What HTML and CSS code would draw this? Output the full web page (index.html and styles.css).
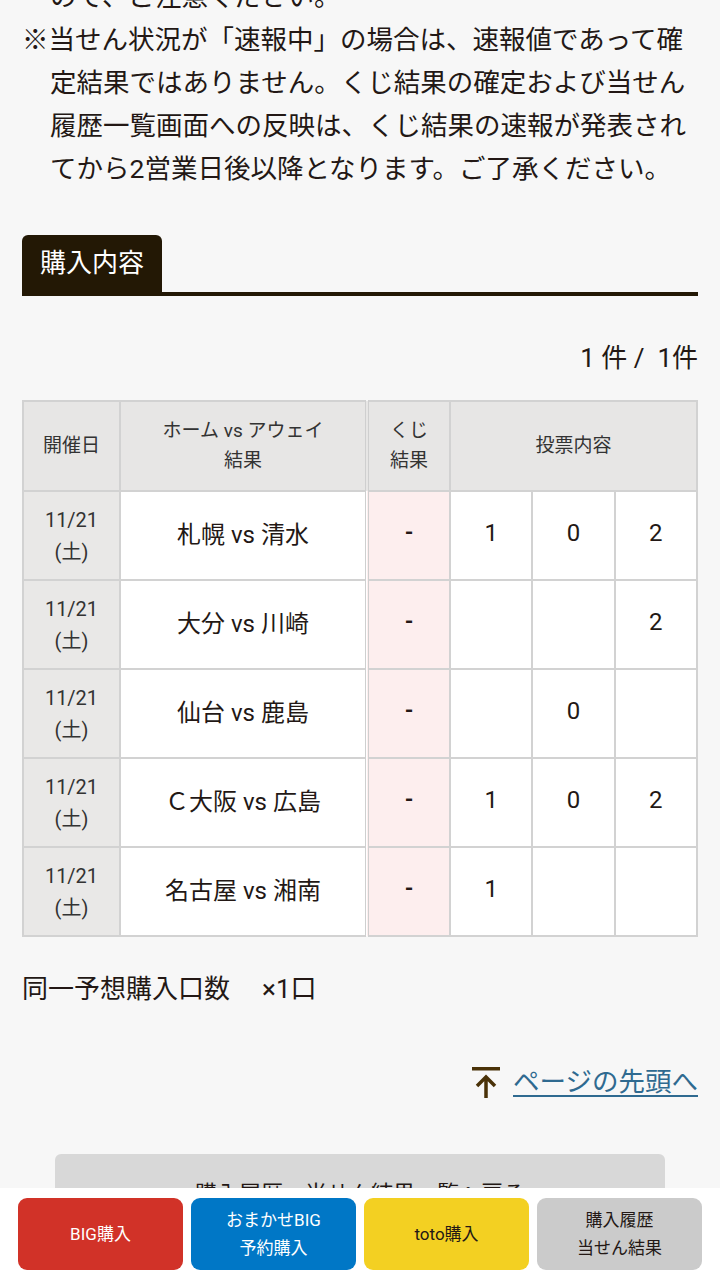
FILE: index.html
```html
<!DOCTYPE html>
<html lang="ja">
<head>
  <meta charset="UTF-8" />
  <meta name="viewport" content="width=device-width, initial-scale=1.0" />
  <title>購入内容</title>
  <link rel="stylesheet" href="styles.css">
</head>
<body>
  <div class="container">
    <div class="notes">
      <p class="note note-tail">ので、ご注意ください。</p>
      <p class="note">※当せん状況が「速報中」の場合は、速報値であって確定結果ではありません。くじ結果の確定および当せん履歴一覧画面への反映は、くじ結果の速報が発表されてから2営業日後以降となります。ご了承ください。</p>
    </div>

    <div class="section-head">
      <h2 class="tab">購入内容</h2>
    </div>

    <p class="count">1 件 /&nbsp; 1件</p>

    <table class="result-table">
      <colgroup>
        <col class="c-date">
        <col class="c-match">
        <col class="c-kuji">
        <col class="c-vote">
        <col class="c-vote">
        <col class="c-vote">
      </colgroup>
      <thead>
        <tr>
          <th>開催日</th>
          <th>ホーム vs アウェイ<br>結果</th>
          <th class="kuji">くじ<br>結果</th>
          <th colspan="3">投票内容</th>
        </tr>
      </thead>
      <tbody>
        <tr>
          <td class="date">11/21<br>(土)</td>
          <td class="match">札幌 vs 清水</td>
          <td class="kuji">-</td>
          <td class="vote">1</td>
          <td class="vote">0</td>
          <td class="vote">2</td>
        </tr>
        <tr>
          <td class="date">11/21<br>(土)</td>
          <td class="match">大分 vs 川崎</td>
          <td class="kuji">-</td>
          <td class="vote"></td>
          <td class="vote"></td>
          <td class="vote">2</td>
        </tr>
        <tr>
          <td class="date">11/21<br>(土)</td>
          <td class="match">仙台 vs 鹿島</td>
          <td class="kuji">-</td>
          <td class="vote"></td>
          <td class="vote">0</td>
          <td class="vote"></td>
        </tr>
        <tr>
          <td class="date">11/21<br>(土)</td>
          <td class="match">Ｃ大阪 vs 広島</td>
          <td class="kuji">-</td>
          <td class="vote">1</td>
          <td class="vote">0</td>
          <td class="vote">2</td>
        </tr>
        <tr>
          <td class="date">11/21<br>(土)</td>
          <td class="match">名古屋 vs 湘南</td>
          <td class="kuji">-</td>
          <td class="vote">1</td>
          <td class="vote"></td>
          <td class="vote"></td>
        </tr>
      </tbody>
    </table>

    <p class="units">同一予想購入口数　<span class="units-num">×1口</span></p>

    <div class="pagetop">
      <a href="#">
        <svg class="pagetop-icon" width="30" height="32" viewBox="0 0 30 32">
          <rect x="1" y="0" width="28" height="3.5" fill="#4a3208"/>
          <path d="M15 31 V11 M6 19 L15 10 L24 19" fill="none" stroke="#4a3208" stroke-width="3.5"/>
        </svg><span class="pagetop-text">ページの先頭へ</span>
      </a>
    </div>

    <div class="back-box">
      <p>購入履歴・当せん結果一覧へ戻る</p>
    </div>
  </div>

  <nav class="bottom-bar">
    <a class="btn btn-big" href="#">BIG購入</a>
    <a class="btn btn-omakase" href="#">おまかせBIG<br>予約購入</a>
    <a class="btn btn-toto" href="#">toto購入</a>
    <a class="btn btn-history" href="#">購入履歴<br>当せん結果</a>
  </nav>
</body>
</html>
```

FILE: styles.css
```css
* {
  margin: 0;
  padding: 0;
  box-sizing: border-box;
}
body {
  font-family: Roboto, "Noto Sans CJK JP", sans-serif;
  background: #f7f7f7;
  color: #231815;
}
.container {
  padding: 0 22px 140px;
}
.notes {
  margin-top: -25px;
}
.note {
  font-size: 26.5px;
  line-height: 43px;
  padding-left: 28px;
  text-indent: -28px;
}
.note-tail {
  text-indent: 0;
}
.section-head {
  margin-top: 45px;
  display: flex;
  border-bottom: 4px solid #231805;
}
.tab {
  background: #231805;
  color: #fff;
  font-size: 26px;
  font-weight: normal;
  height: 57px;
  line-height: 57px;
  padding: 0 18px;
  border-radius: 6px 6px 0 0;
}
.count {
  margin-top: 45px;
  text-align: right;
  font-size: 26px;
  line-height: 34px;
  margin-bottom: 25px;
}
.result-table {
  width: 100%;
  border-collapse: collapse;
  table-layout: fixed;
  border: 2px solid #d2d2d2;
}
.c-date { width: 97px; }
.c-match { width: 247px; }
.c-kuji { width: 83px; }
.result-table th,
.result-table td {
  border: 2px solid #d2d2d2;
  text-align: center;
  vertical-align: middle;
}
.result-table th {
  background: #e7e6e5;
  font-size: 19px;
  font-weight: normal;
  line-height: 30px;
  color: #333;
  height: 90px;
}
.result-table .kuji {
  border-left: 4px double #cfcfcf;
}
.result-table td {
  height: 89px;
  background: #fff;
}
.result-table td.date {
  background: #e9e8e7;
  font-size: 20px;
  line-height: 32px;
  color: #333;
}
.result-table td.match,
.result-table td.vote,
.result-table td.kuji {
  font-size: 24px;
  padding-bottom: 6px;
}
.result-table td.kuji {
  background: #fdeeee;
  font-size: 22px;
  font-weight: bold;
}
.units {
  margin-top: 35px;
  font-size: 26px;
  line-height: 34px;
}
.units-num {
  margin-left: 6px;
}
.pagetop {
  margin-top: 56px;
  display: flex;
  justify-content: flex-end;
}
.pagetop a {
  display: flex;
  align-items: center;
  gap: 12px;
  color: #2f6a90;
  text-decoration: none;
}
.pagetop-icon {
  margin-top: 2px;
}
.pagetop-text {
  font-size: 26.5px;
  line-height: 40px;
  text-decoration: underline;
  text-underline-offset: 4px;
}
.back-box {
  margin: 52px 33px 0;
  background: #d8d8d8;
  border-radius: 6px;
  padding: 22px 20px 30px;
  text-align: center;
  font-size: 22px;
  line-height: 36px;
}
.bottom-bar {
  position: fixed;
  left: 0;
  right: 0;
  bottom: 0;
  height: 92px;
  background: #fff;
  display: flex;
  gap: 8px;
  padding: 10px 18px;
}
.btn {
  flex: 1;
  display: flex;
  align-items: center;
  justify-content: center;
  text-align: center;
  border-radius: 9px;
  font-size: 17px;
  line-height: 28px;
  text-decoration: none;
  height: 72px;
}
.btn-big {
  background: #d13228;
  color: #fff;
}
.btn-omakase {
  background: #0077c6;
  color: #fff;
}
.btn-toto {
  background: #f3d022;
  color: #231815;
}
.btn-history {
  background: #cbcbcb;
  color: #231815;
}
```
